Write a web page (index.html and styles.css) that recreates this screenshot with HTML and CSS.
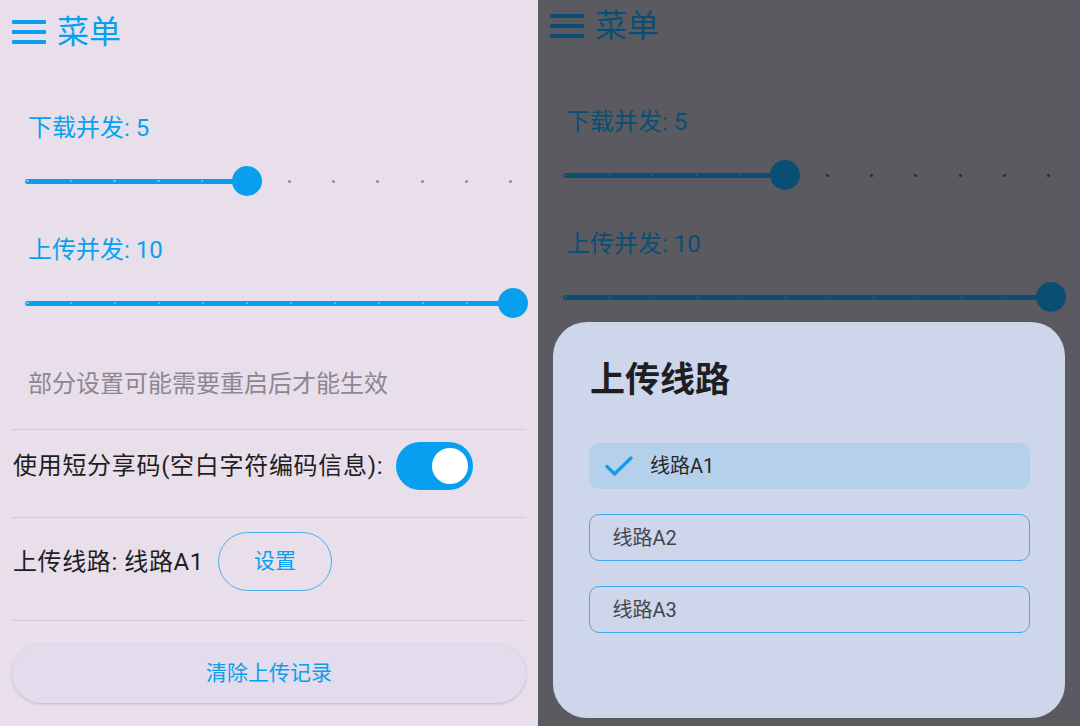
FILE: index.html
```html
<!DOCTYPE html>
<html lang="zh-CN">
<head>
<meta charset="utf-8">
<title>菜单</title>
<link rel="stylesheet" href="styles.css">
</head>
<body>
<div class="screen">
  <div class="panel">
    <header class="appbar">
      <svg class="menu-icon" width="34" height="24" viewBox="0 0 34 24"><rect x="0" y="0" width="34" height="4" rx="1"/><rect x="0" y="10" width="34" height="4" rx="1"/><rect x="0" y="20" width="34" height="4" rx="1"/></svg>
      <span class="title">菜单</span>
    </header>
    <section class="slider-setting first">
      <div class="slider-label">下载并发: 5</div>
      <div class="slider" style="--pct:45.45%">
        <div class="fill"></div>
        <div class="ticks"><i class="on"></i><i class="on"></i><i class="on"></i><i class="on"></i><i class="on"></i><i class="on"></i><i></i><i></i><i></i><i></i><i></i><i></i></div>
        <div class="thumb"></div>
      </div>
    </section>
    <section class="slider-setting">
      <div class="slider-label">上传并发: 10</div>
      <div class="slider" style="--pct:100%">
        <div class="fill"></div>
        <div class="ticks"><i class="on"></i><i class="on"></i><i class="on"></i><i class="on"></i><i class="on"></i><i class="on"></i><i class="on"></i><i class="on"></i><i class="on"></i><i class="on"></i><i class="on"></i><i class="on"></i></div>
        <div class="thumb"></div>
      </div>
    </section>
    <p class="hint">部分设置可能需要重启后才能生效</p>
    <div class="divider"></div>
    <div class="row row-toggle">
      <span class="row-text">使用短分享码(空白字符编码信息):</span>
      <div class="switch"><i></i></div>
    </div>
    <div class="divider"></div>
    <div class="row row-route">
      <span class="row-text">上传线路: 线路A1</span>
      <button class="btn-outline">设置</button>
    </div>
    <div class="divider"></div>
    <button class="btn-tonal">清除上传记录</button>
  </div>

  <div class="panel dim">
    <header class="appbar">
      <svg class="menu-icon" width="34" height="24" viewBox="0 0 34 24"><rect x="0" y="0" width="34" height="4" rx="1"/><rect x="0" y="10" width="34" height="4" rx="1"/><rect x="0" y="20" width="34" height="4" rx="1"/></svg>
      <span class="title">菜单</span>
    </header>
    <section class="slider-setting first">
      <div class="slider-label">下载并发: 5</div>
      <div class="slider" style="--pct:45.45%">
        <div class="fill"></div>
        <div class="ticks"><i class="on"></i><i class="on"></i><i class="on"></i><i class="on"></i><i class="on"></i><i class="on"></i><i></i><i></i><i></i><i></i><i></i><i></i></div>
        <div class="thumb"></div>
      </div>
    </section>
    <section class="slider-setting">
      <div class="slider-label">上传并发: 10</div>
      <div class="slider" style="--pct:100%">
        <div class="fill"></div>
        <div class="ticks"><i class="on"></i><i class="on"></i><i class="on"></i><i class="on"></i><i class="on"></i><i class="on"></i><i class="on"></i><i class="on"></i><i class="on"></i><i class="on"></i><i class="on"></i><i class="on"></i></div>
        <div class="thumb"></div>
      </div>
    </section>
    <div class="sheet">
      <h2 class="sheet-title">上传线路</h2>
      <div class="options">
        <div class="option selected">
          <svg class="check" width="28" height="20" viewBox="0 0 28 20"><path d="M2 10.5 L9.5 18 L26 2" fill="none" stroke="#129bea" stroke-width="3.2" stroke-linecap="round" stroke-linejoin="round"/></svg>
          <span>线路A1</span>
        </div>
        <div class="option outlined"><span>线路A2</span></div>
        <div class="option outlined"><span>线路A3</span></div>
      </div>
    </div>
  </div>
</div>
</body>
</html>
```

FILE: styles.css
```css
* { box-sizing: border-box; }
html, body { margin: 0; padding: 0; }
body {
  width: 1080px;
  height: 726px;
  overflow: hidden;
  font-family: Roboto, "Noto Sans CJK SC", sans-serif;
  background: #5c5a61;
}
.screen {
  display: flex;
  width: 1080px;
  height: 726px;
}
.panel {
  --bg: #e8dfeb;
  --accent: #08a0ee;
  --tick-on: #6ccaf8;
  --tick-off: #8f8a95;
  width: 538px;
  height: 726px;
  padding: 0 12px;
  background: var(--bg);
  overflow: hidden;
  display: flex;
  flex-direction: column;
}
.panel.dim {
  --bg: #5c5a61;
  --accent: #0b4e74;
  --tick-on: #1d5f85;
  --tick-off: #2c2b31;
  width: 542px;
}
.appbar {
  height: 64px;
  display: flex;
  align-items: center;
  gap: 11px;
  flex-shrink: 0;
}
.dim .appbar { margin-top: -6px; }
.menu-icon { fill: var(--accent); display: block; }
.title {
  font-size: 32px;
  line-height: 40px;
  color: var(--accent);
}
.slider-setting { flex-shrink: 0; }
.slider-label {
  margin-top: 38px;
  padding-left: 16px;
  font-size: 24px;
  line-height: 32px;
  color: var(--accent);
}
.slider-setting.first .slider-label { margin-top: 48px; }
.slider {
  position: relative;
  margin: 22px 0 0 13px;
  width: 488px;
  height: 30px;
}
.fill {
  position: absolute;
  left: 0;
  top: 12.5px;
  height: 5px;
  width: var(--pct);
  border-radius: 3px;
  background: var(--accent);
}
.ticks {
  position: relative;
  height: 30px;
  display: flex;
  justify-content: space-between;
  align-items: center;
  padding: 0 1px;
}
.ticks i {
  display: block;
  width: 3px;
  height: 3px;
  border-radius: 50%;
  background: var(--tick-off);
}
.ticks i.on { background: var(--tick-on); width: 2.5px; height: 2.5px; }
.thumb {
  position: absolute;
  top: 0;
  left: var(--pct);
  width: 30px;
  height: 30px;
  margin-left: -15px;
  border-radius: 50%;
  background: var(--accent);
}
.hint {
  margin: 50px 0 0;
  padding-left: 16px;
  font-size: 24px;
  line-height: 32px;
  color: #8c8791;
  flex-shrink: 0;
}
.divider {
  height: 1px;
  background: #d3cad6;
  flex-shrink: 0;
}
.hint + .divider { margin-top: 29px; }
.row {
  display: flex;
  align-items: center;
  padding-left: 1px;
  flex-shrink: 0;
}
.row-text {
  font-size: 24px;
  line-height: 32px;
  color: #1f1d22;
}
.row-toggle { padding-top: 12px; padding-bottom: 27px; gap: 13px; }
.row-toggle .row-text { letter-spacing: 0.7px; }
.row-route { padding-top: 14px; padding-bottom: 29px; gap: 14px; }
.row-route .row-text { letter-spacing: 0.6px; }
.switch {
  width: 77px;
  height: 48px;
  border-radius: 24px;
  background: var(--accent);
  display: flex;
  align-items: center;
  justify-content: flex-end;
  padding-right: 5px;
}
.switch i {
  display: block;
  width: 36px;
  height: 36px;
  border-radius: 50%;
  background: #ffffff;
}
.btn-outline {
  width: 114px;
  height: 59px;
  border: 1.5px solid #4aaeea;
  border-radius: 30px;
  background: transparent;
  font-family: inherit;
  font-size: 21px;
  line-height: 28px;
  color: var(--accent);
  padding: 0 0 2px;
}
.btn-tonal {
  margin-top: 23px;
  height: 59px;
  width: 100%;
  border: none;
  border-radius: 30px;
  background: #e2dced;
  box-shadow: 0 1px 3px rgba(60, 40, 80, 0.22);
  font-family: inherit;
  font-size: 21px;
  line-height: 28px;
  color: var(--accent);
  padding: 0 0 2px;
  flex-shrink: 0;
}
.sheet {
  margin: 10px 3px 0;
  height: 396px;
  flex-shrink: 0;
  background: #cdd6ea;
  border-radius: 34px;
  padding: 39px 35px 0 36px;
}
.sheet-title {
  margin: 0;
  padding-left: 1px;
  font-size: 35px;
  line-height: 40px;
  font-weight: 700;
  color: #1e1e23;
}
.options {
  margin-top: 42px;
  display: flex;
  flex-direction: column;
  gap: 25px;
}
.option {
  display: flex;
  align-items: center;
  border-radius: 10px;
  font-size: 20px;
  line-height: 28px;
}
.option.selected {
  height: 46px;
  background: #b5d0eb;
  padding-left: 16px;
  gap: 17px;
  color: #26262c;
}
.check { display: block; }
.option.outlined {
  height: 47px;
  border: 1.5px solid #3ea8ee;
  padding-left: 22.5px;
  color: #45444c;
}
```
